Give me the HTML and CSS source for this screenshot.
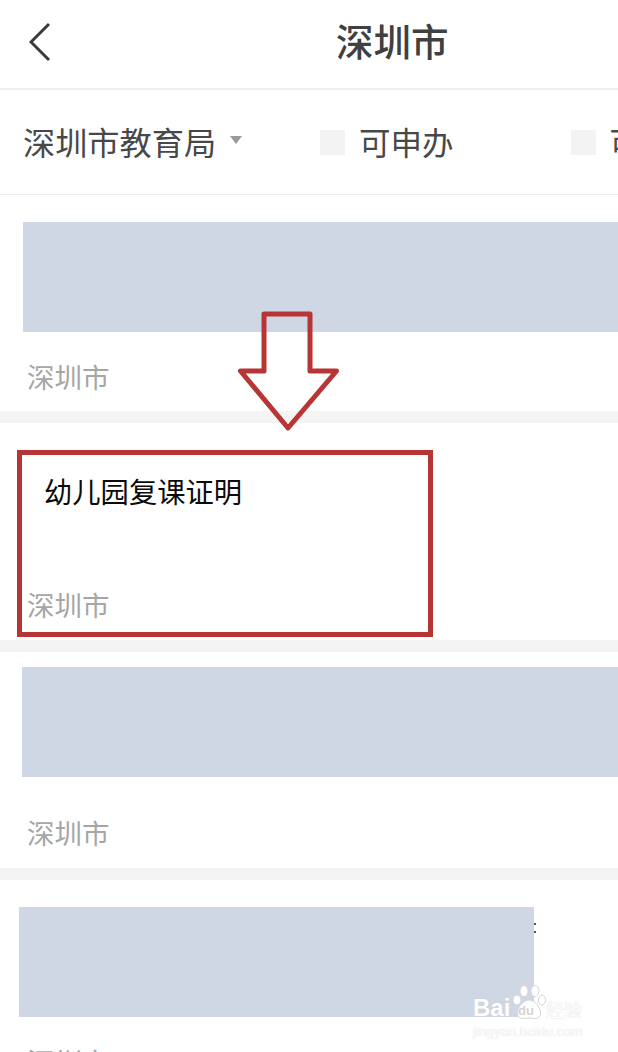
FILE: index.html
```html
<!DOCTYPE html>
<html lang="zh-CN">
<head>
<meta charset="utf-8">
<title>深圳市</title>
<link rel="stylesheet" href="styles.css">
</head>
<body>
<div class="page">
  <header class="topbar">
    <svg class="back" width="22" height="40" viewBox="0 0 22 40"><path d="M20 2 L2 20 L20 38" fill="none" stroke="#3a3a3a" stroke-width="3"/></svg>
    <h1 class="title">深圳市</h1>
  </header>
  <nav class="filters">
    <span class="dept">深圳市教育局</span>
    <span class="caret"></span>
    <span class="check check-first"></span>
    <span class="filter-label">可申办</span>
    <span class="check check-second"></span>
    <span class="filter-label">可预约</span>
  </nav>
  <main class="list">
    <section class="card card-a">
      <div class="mask mask-a"></div>
      <p class="city city-after-26">深圳市</p>
    </section>
    <section class="card card-b">
      <h2 class="item-title">幼儿园复课证明</h2>
      <p class="city city-bottom">深圳市</p>
    </section>
    <section class="card card-c">
      <div class="mask mask-c"></div>
      <p class="city city-after-37">深圳市</p>
    </section>
    <section class="card card-d">
      <div class="mask mask-d"></div>
      <span class="more"></span>
      <p class="city city-after-26">深圳市</p>
    </section>
  </main>

  <div class="highlight"></div>
  <svg class="arrow" width="106" height="124" viewBox="0 0 106 124"><path d="M27 3 H73 V60 H99.5 L51 117 L3.5 60 H27 Z" fill="none" stroke="#b83535" stroke-width="5" stroke-linejoin="round"/></svg>

  <div class="watermark">
    <div class="wm-top">
      <span class="wm-bai">Bai</span>
      <svg class="wm-paw" width="34" height="36" viewBox="0 0 34 36">
        <g fill="#fff" stroke="#d6d6d6" stroke-width="1">
          <ellipse cx="5" cy="15" rx="4" ry="5"/>
          <ellipse cx="12" cy="6" rx="4" ry="5.5"/>
          <ellipse cx="23" cy="6" rx="4" ry="5.5"/>
          <ellipse cx="30" cy="15" rx="3.5" ry="5"/>
          <path d="M17 15 C24 15 31 26 28 31 C25 35 21 33 17 33 C13 33 9 35 6 31 C3 26 10 15 17 15 Z"/>
        </g>
      </svg>
      <span class="wm-du">du</span>
      <span class="wm-cn">经验</span>
    </div>
    <div class="wm-url">jingyan.baidu.com</div>
  </div>
</div>
</body>
</html>
```
FILE: styles.css
```css
* { box-sizing: border-box; }
html, body { margin: 0; padding: 0; background: #fff; }
body { font-family: "Noto Sans CJK SC", "Noto Sans", sans-serif; }

.page {
  position: relative;
  width: 618px;
  height: 1052px;
  overflow: hidden;
}

.topbar {
  display: flex;
  align-items: center;
  height: 90px;
  padding-left: 336px;
  border-bottom: 2px solid #efefef;
  position: relative;
}
.back { position: absolute; left: 29px; top: 22px; }
.title {
  margin: 0;
  font-size: 37.5px;
  line-height: 50px;
  font-weight: 500;
  color: #404040;
  padding-bottom: 8px;
}

.filters {
  display: flex;
  align-items: center;
  height: 105px;
  padding-left: 23px;
  padding-bottom: 2px;
  border-bottom: 1px solid #ececec;
  white-space: nowrap;
  overflow: hidden;
}
.dept { font-size: 32.2px; line-height: 44px; color: #484848; width: 193px; flex: none; }
.caret {
  flex: none;
  width: 0;
  height: 0;
  margin: 0 0 3px 14px;
  border-left: 6px solid transparent;
  border-right: 6px solid transparent;
  border-top: 8px solid #9a9a9a;
}
.check { flex: none; width: 25px; height: 25px; background: #f3f3f3; margin-top: 2px; }
.check-first { margin-left: 78px; }
.check-second { margin-left: 117px; }
.filter-label { flex: none; margin-left: 14px; font-size: 31.5px; line-height: 44px; color: #484848; }

.list {
  display: flex;
  flex-direction: column;
  gap: 12px;
  background: #f4f4f4;
}
.card { background: #fff; height: 216px; flex: none; position: relative; }
.card-b { height: 217px; padding-top: 48px; }
.card-a { padding-top: 27px; }
.card-c { padding-top: 15px; }
.card-d { padding-top: 27px; }

.mask { height: 110px; background: #cfd7e4; }
.mask-a { margin-left: 23px; }
.mask-c { margin-left: 22px; }
.mask-d { margin-left: 19px; width: 515px; }

.more {
  position: absolute;
  left: 534px;
  top: 43px;
  width: 2px;
  height: 10px;
  border-top: 2px solid #555;
  border-bottom: 2px solid #555;
}

.city {
  margin: 0 0 0 27px;
  font-size: 27.5px;
  line-height: 40px;
  color: #a6a6a6;
}
.city-after-26 { margin-top: 24px; }
.city-after-37 { margin-top: 35px; }
.city-bottom { margin-top: 73px; }

.item-title {
  margin: 0 0 0 44px;
  font-size: 28.3px;
  line-height: 40px;
  font-weight: 400;
  color: #0a0a0a;
}

.highlight {
  position: absolute;
  left: 17px;
  top: 450px;
  width: 416px;
  height: 187px;
  border: 5px solid #b83535;
}
.arrow { position: absolute; left: 237px; top: 311px; }

.watermark {
  position: absolute;
  left: 473px;
  top: 985px;
  width: 112px;
  color: #fff;
  text-shadow: 0 0 1px #c8c8c8;
}
.wm-top { display: flex; align-items: flex-end; height: 36px; position: relative; }
.wm-bai { font-family: "Liberation Sans", sans-serif; font-weight: 700; font-size: 24px; line-height: 26px; width: 39px; flex: none; }
.wm-paw { flex: none; }
.wm-du {
  position: absolute;
  left: 45px;
  top: 19px;
  font-family: "Liberation Sans", sans-serif;
  font-weight: 700;
  font-size: 13px;
  line-height: 14px;
  color: #d4d4d4;
  text-shadow: none;
}
.wm-cn { font-size: 18px; line-height: 24px; flex: none; }
.wm-url {
  margin-top: 3px;
  font-family: "Liberation Sans", sans-serif;
  font-size: 13.6px;
  line-height: 16px;
  white-space: nowrap;
}
```
